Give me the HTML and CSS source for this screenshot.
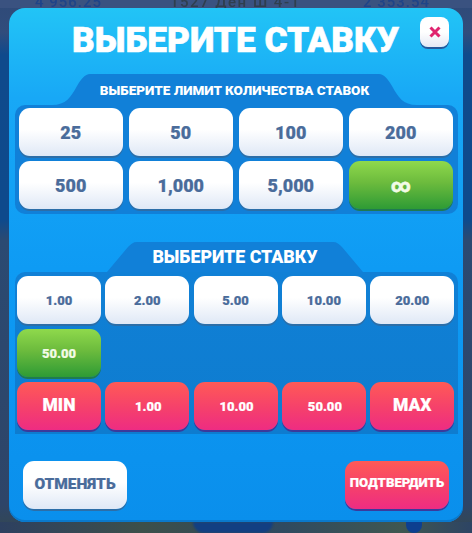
FILE: index.html
```html
<!DOCTYPE html>
<html lang="ru">
<head>
<meta charset="utf-8">
<title>Выберите ставку</title>
<link rel="stylesheet" href="styles.css">
</head>
<body>
<div class="backdrop">
  <div class="stats">
    <span class="stat-a">4 956.25</span>
    <span class="stat-b">1527 Ден Ш 4-1</span>
    <span class="stat-c">2 353.54</span>
  </div>
  <div class="bottom-strip">
    <span class="blob-a"></span>
    <span class="blob-b"></span>
  </div>
</div>
<main class="modal">
  <header class="modal-head">
    <h1 class="title">ВЫБЕРИТЕ СТАВКУ</h1>
    <button class="btn close" aria-label="Закрыть">
      <svg viewBox="0 0 14 14" class="close-icon"><path d="M2.5 2.5 11.5 11.5M11.5 2.5 2.5 11.5"/></svg>
    </button>
  </header>

  <section class="group group-limit">
    <div class="tab tab-limit">
      <svg class="wing" viewBox="0 0 40 31" preserveAspectRatio="none"><path d="M0 31H2C16 31 21 23 27 12 31 5 35 0 40 0V31Z"/></svg>
      <h2 class="tab-label">ВЫБЕРИТЕ ЛИМИТ КОЛИЧЕСТВА СТАВОК</h2>
      <svg class="wing" viewBox="0 0 40 31" preserveAspectRatio="none"><path d="M40 31H38C24 31 19 23 13 12 9 5 5 0 0 0V31Z"/></svg>
    </div>
    <div class="panel grid-limit">
      <button class="btn white big">25</button>
      <button class="btn white big">50</button>
      <button class="btn white big">100</button>
      <button class="btn white big">200</button>
      <button class="btn white big">500</button>
      <button class="btn white big">1,000</button>
      <button class="btn white big">5,000</button>
      <button class="btn green inf">∞</button>
    </div>
  </section>

  <section class="group group-bet">
    <div class="tab tab-bet">
      <svg class="wing wing-bet" viewBox="0 0 38 30" preserveAspectRatio="none"><path d="M0 30 8 30 29 5C32 2 34 0 38 0V30Z"/></svg>
      <h2 class="tab-label tab-label-bet">ВЫБЕРИТЕ СТАВКУ</h2>
      <svg class="wing wing-bet" viewBox="0 0 38 30" preserveAspectRatio="none"><path d="M38 30 30 30 9 5C6 2 4 0 0 0V30Z"/></svg>
    </div>
    <div class="panel grid-bet">
      <button class="btn white small">1.00</button>
      <button class="btn white small">2.00</button>
      <button class="btn white small">5.00</button>
      <button class="btn white small">10.00</button>
      <button class="btn white small">20.00</button>
      <button class="btn green small">50.00</button>
      <button class="btn red mid row-start">MIN</button>
      <button class="btn red small shift">1.00</button>
      <button class="btn red small shift">10.00</button>
      <button class="btn red small shift">50.00</button>
      <button class="btn red mid">MAX</button>
    </div>
  </section>

  <footer class="actions">
    <button class="btn white action cancel">ОТМЕНЯТЬ</button>
    <button class="btn red action confirm">ПОДТВЕРДИТЬ</button>
  </footer>
</main>
</body>
</html>
```
FILE: styles.css
```css
* { box-sizing: border-box; }
html, body { margin: 0; height: 100%; }
body {
  width: 472px;
  height: 533px;
  overflow: hidden;
  position: relative;
  font-family: Roboto, "Liberation Sans", sans-serif;
  background: linear-gradient(180deg, #2f4a78 0, #314d7c 32px, #0f4a8c 55px, #0e4a8c 220px, #2b4a72 240px, #2e4568 505px, #34474f 533px);
}
.backdrop { height: 533px; display: flex; flex-direction: column; justify-content: space-between; }
.stats {
  height: 8px; overflow: hidden;
  display: flex; line-height: 5px; font-weight: 500;
  filter: blur(.5px);
  background: #3a5280;
}
.stats span { display: block; white-space: nowrap; }
.stat-a { margin-left: 35px; width: 135px; color: #1f4488; font-size: 15px; letter-spacing: 1px; }
.stat-b { width: 193px; color: #2f3f4e; font-size: 15px; letter-spacing: 1.5px; }
.stat-c { color: #1f4488; font-size: 15px; letter-spacing: 1px; }
.bottom-strip {
  height: 11px; display: flex;
  background: linear-gradient(90deg, #2d4060 0, #3c4f4a 30%, #2f4a60 60%, #3f5750 85%, #2d4464 100%);
}
.blob-a { width: 80px; height: 11px; margin-left: 193px; background: #123f82; border-radius: 0 0 24px 24px; filter: blur(1px); }
.blob-b { width: 16px; height: 11px; margin-left: 133px; background: #0d3f8f; border-radius: 0 0 8px 8px; }

.modal {
  position: absolute; left: 9px; top: 8px;
  width: 454px; height: 514px;
  padding: 0 5px 0 6px;
  border-radius: 16px;
  background: linear-gradient(180deg, #22c4f6 0, #18a8f6 90px, #0e9bf4 260px, #0a8fec 100%);
  box-shadow: inset 0 -2px 0 #0a79cc;
  display: flex; flex-direction: column;
}
.modal-head { height: 66px; display: flex; align-items: flex-start; justify-content: center; position: relative; }
.title {
  margin: 12px 0 0; font-size: 35.2px; line-height: 40px; font-weight: 900; color: #fff;
  -webkit-text-stroke: .6px #fff; white-space: nowrap;
  position: relative; left: -1px;
}
.btn {
  border: 0; padding: 0; margin: 0;
  display: flex; align-items: center; justify-content: center;
  font-family: inherit; font-weight: 900; height: 48px; border-radius: 11px;
  -webkit-text-stroke: .2px currentColor;
}
.white { color: #4a6c9b; background: linear-gradient(180deg, #fff 0, #fff 45%, #dfe8f6 100%); box-shadow: 0 2px 0 #2c6ea8; }
.green { color: #f2fbe6; background: linear-gradient(180deg, #8fd94c 0, #6cbb3d 45%, #2e9b35 100%); box-shadow: 0 2px 0 #1f7a52; }
.red { color: #fff; background: linear-gradient(180deg, #ff5a56 0, #f5406c 55%, #ee2c82 100%); box-shadow: 0 2px 0 #3a3a9c; }
.close {
  position: absolute; right: 9px; top: 9px;
  width: 29px; height: 30px; border-radius: 8px;
  background: linear-gradient(180deg, #fff 0, #fff 50%, #e4e8f4 100%);
  box-shadow: 0 2px 0 #27589a;
}
.close-icon { width: 14px; height: 14px; fill: none; stroke: #e0246f; stroke-width: 3; }

.tab { display: flex; align-items: stretch; justify-content: center; height: 31px; padding-right: 4px; }
.tab svg { display: block; fill: #1180d8; }
.wing { width: 40px; height: 31px; flex: none; }
.tab-label {
  margin: 0; padding-top: 1px; background: #1180d8; color: #fff;
  font-size: 13.5px; line-height: 30px; font-weight: 900; white-space: nowrap; text-align: center;
}
.tab-limit .tab-label { width: 289px; flex: none; }
.tab-bet { height: 30px; margin-top: 28px; padding-right: 3px; }
.wing-bet { width: 38px; height: 30px; }
.tab-label-bet { font-size: 17.8px; width: 196px; padding-top: 0; flex: none; }

.panel { background: #1180d8; border-radius: 10px; }
.grid-limit {
  display: grid; grid-template-columns: repeat(4, 103.5px); gap: 5px 6.5px;
  padding: 3px 5px 5px 4px;
}
.grid-bet {
  background: linear-gradient(180deg, #1080d6, #0e7ccf);
  display: grid; grid-template-columns: repeat(5, 84px); gap: 5px 4.3px;
  padding: 4px 3px 4px 2px;
  border-radius: 10px 10px 0 0;
}
.row-start { grid-column: 1; }
.big { font-size: 18px; }
.small { font-size: 13px; }
.shift { padding-left: 2px; }
.mid { font-size: 17.5px; padding-bottom: 3px; }
.inf { font-size: 19px; line-height: 1; -webkit-text-stroke: .5px #f2fbe6; }
.actions { display: flex; justify-content: space-between; padding: 27px 9px 0 8px; }
.action { width: 104px; }
.cancel { font-size: 15.5px; padding-bottom: 2px; }
.confirm { font-size: 13.2px; padding-bottom: 6px; }
```
